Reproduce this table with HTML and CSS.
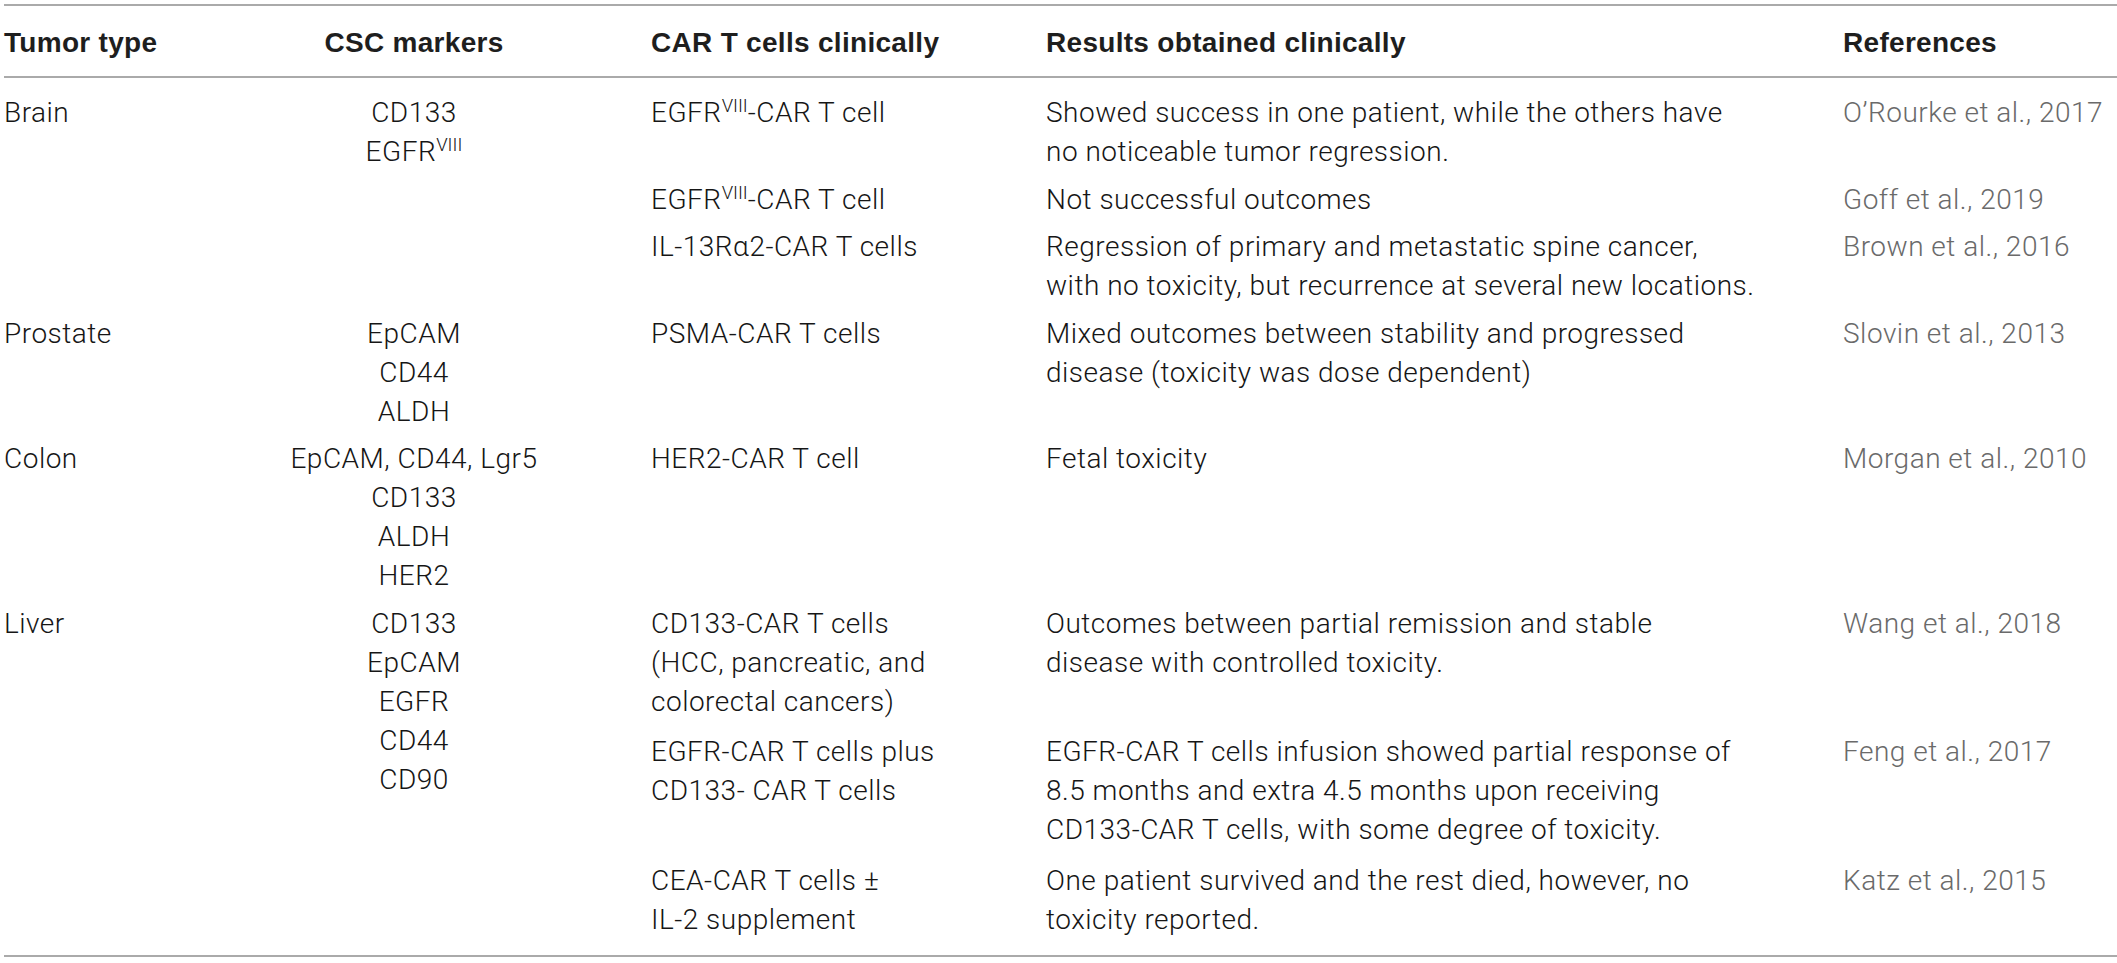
FILE: index.html
```html
<!DOCTYPE html>
<html>
    <head>
        <title>CSC markers and CAR T cells</title>
        <link rel="stylesheet" href="styles.css">
    </head>
    <body>
        <table class="csc-table">
            <colgroup>
                <col class="col-tumor">
                <col class="col-markers">
                <col class="col-car">
                <col class="col-results">
                <col class="col-refs">
            </colgroup>
            <thead>
                <tr>
                    <th>Tumor type</th>
                    <th class="center">CSC markers</th>
                    <th class="car">CAR T cells clinically</th>
                    <th>Results obtained clinically</th>
                    <th>References</th>
                </tr>
            </thead>
            <tbody>
                <!-- brain -->
                <tr class="first">
                    <td rowspan="3">Brain</td>
                    <td rowspan="3" class="center">CD133<br>EGFR<sup>VIII</sup></td>
                    <td class="car">EGFR<sup>VIII</sup>-CAR T cell</td>
                    <td>Showed success in one patient, while the others have<br>no noticeable tumor regression.</td>
                    <td class="ref">O’Rourke et al., 2017</td>
                </tr>
                <tr>
                    <td class="car">EGFR<sup>VIII</sup>-CAR T cell</td>
                    <td>Not successful outcomes</td>
                    <td class="ref">Goff et al., 2019</td>
                </tr>
                <tr>
                    <td class="car">IL-13Rα2-CAR T cells</td>
                    <td>Regression of primary and metastatic spine cancer,<br>with no toxicity, but recurrence at several new locations.</td>
                    <td class="ref">Brown et al., 2016</td>
                </tr>

                <!-- prostate -->
                <tr>
                    <td>Prostate</td>
                    <td class="center">EpCAM<br>CD44<br>ALDH</td>
                    <td class="car">PSMA-CAR T cells</td>
                    <td>Mixed outcomes between stability and progressed<br>disease (toxicity was dose dependent)</td>
                    <td class="ref">Slovin et al., 2013</td>
                </tr>

                <!-- colon -->
                <tr>
                    <td>Colon</td>
                    <td class="center">EpCAM, CD44, Lgr5<br>CD133<br>ALDH<br>HER2</td>
                    <td class="car">HER2-CAR T cell</td>
                    <td>Fetal toxicity</td>
                    <td class="ref">Morgan et al., 2010</td>
                </tr>

                <!-- liver -->
                <tr class="wide">
                    <td rowspan="3">Liver</td>
                    <td rowspan="3" class="center">CD133<br>EpCAM<br>EGFR<br>CD44<br>CD90</td>
                    <td class="car">CD133-CAR T cells<br>(HCC, pancreatic, and<br>colorectal cancers)</td>
                    <td>Outcomes between partial remission and stable<br>disease with controlled toxicity.</td>
                    <td class="ref">Wang et al., 2018</td>
                </tr>
                <tr class="wide">
                    <td class="car">EGFR-CAR T cells plus<br>CD133- CAR T cells</td>
                    <td>EGFR-CAR T cells infusion showed partial response of<br>8.5 months and extra 4.5 months upon receiving<br>CD133-CAR T cells, with some degree of toxicity.</td>
                    <td class="ref">Feng et al., 2017</td>
                </tr>
                <tr class="last">
                    <td class="car">CEA-CAR T cells ±<br>IL-2 supplement</td>
                    <td>One patient survived and the rest died, however, no<br>toxicity reported.</td>
                    <td class="ref">Katz et al., 2015</td>
                </tr>
            </tbody>
        </table>
    </body>
</html>
```

FILE: styles.css
```css
* {
    margin: 0;
    padding: 0;
    box-sizing: border-box;
}

body {
    background: #fff;
    color: #161616;
    font-family: Roboto, 'Liberation Sans', sans-serif;
    font-weight: 300;
    font-size: 28px;
    line-height: 39px;
    letter-spacing: 0.5px;
    overflow: hidden;
}

.csc-table {
    margin: 4px 0 0 4px;
    width: 2113px;
    table-layout: fixed;
    border-collapse: collapse;
    border-top: 2px solid #aaa;
    border-bottom: 2px solid #aaa;
}

.col-tumor { width: 224px; }
.col-markers { width: 372px; }
.col-car { width: 446px; }
.col-results { width: 797px; }
.col-refs { width: 274px; }

th,
td {
    text-align: left;
    vertical-align: top;
    white-space: nowrap;
}

th {
    font-family: 'Liberation Sans', Arial, sans-serif;
    font-weight: bold;
    letter-spacing: 0.3px;
    color: #1e1e1e;
    padding: 17px 0 14px;
    border-bottom: 2px solid #aaa;
}

td {
    padding: 4px 0 4.5px;
}

tr.first td {
    padding-top: 15px;
}

tr.wide td {
    padding-bottom: 7.5px;
}

tr.last td {
    padding-bottom: 16px;
}

.center {
    text-align: center;
}

.car {
    padding-left: 51px;
}

.ref {
    color: #6a6a6a;
}

sup {
    font-size: 0.66em;
    line-height: 0;
    vertical-align: 0.56em;
    letter-spacing: 0;
}
```
